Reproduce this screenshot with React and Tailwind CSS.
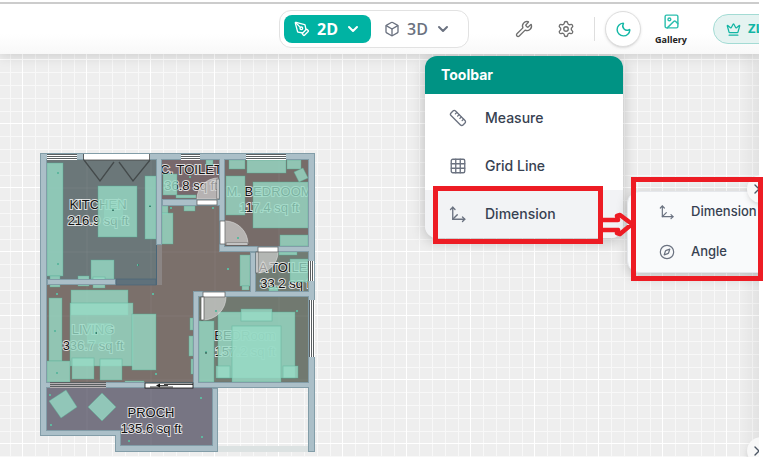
import {
  Box,
  ChevronDown,
  ChevronRight,
  Compass,
  Crown,
  Grid3x3,
  Image,
  Moon,
  Move3d,
  PenTool,
  Ruler,
  Settings,
  Wrench,
} from "lucide-react";

const WALL = "#abbfc8";
const WALL_EDGE = "#829da8";

const rooms = [
  { fill: "#6b7779", points: "46,159 157,159 157,280 46,280" },
  { fill: "#7b706b", points: "46,284 157,284 157,205 252,205 252,292 194,292 194,383 46,383" },
  { fill: "#78686c", points: "161,159 220,159 220,200 161,200" },
  { fill: "#776c69", points: "224,159 309,159 309,247 224,247" },
  { fill: "#717c74", points: "255,251 309,251 309,292 255,292" },
  { fill: "#717970", points: "198,296 309,296 309,383 198,383" },
  { fill: "#777583", points: "46,387 213,387 213,446 120,446 120,431 46,431" },
];

const labels = [
  { x: 98, y: 209, name: "KITCHEN", area: "216.9 sq ft" },
  { x: 191, y: 174, name: "C. TOILET", area: "36.8 sq ft" },
  { x: 269, y: 196, name: "M. BEDROOM", area: "117.4 sq ft" },
  { x: 287, y: 272, name: "A TOILET", area: "33.2 sq ft" },
  { x: 93, y: 334, name: "LIVING", area: "336.7 sq ft" },
  { x: 245, y: 340, name: "BEDRoom", area: "157.2 sq ft" },
  { x: 151, y: 417, name: "PROCH", area: "135.6 sq ft" },
];

// x, y, width, height
const furniture = [
  [47, 163, 16, 113],
  [98, 186, 39, 51],
  [145, 176, 11, 63],
  [91, 260, 23, 19],
  [50, 276, 10, 11],
  [78, 276, 11, 10],
  [93, 277, 12, 11],
  [163, 174, 14, 21],
  [176, 195, 20, 3],
  [206, 160, 7, 5],
  [162, 206, 6, 8],
  [162, 213, 11, 31],
  [184, 206, 11, 5],
  [229, 160, 16, 9],
  [247, 160, 39, 13],
  [287, 160, 14, 9],
  [226, 176, 19, 39],
  [253, 182, 55, 46],
  [280, 235, 28, 11],
  [279, 252, 18, 3],
  [290, 259, 18, 23],
  [240, 255, 10, 31],
  [242, 286, 7, 4],
  [269, 287, 9, 4],
  [71, 290, 57, 25],
  [70, 303, 63, 63],
  [132, 314, 24, 56],
  [49, 298, 13, 63],
  [47, 361, 23, 21],
  [72, 358, 22, 21],
  [100, 359, 22, 21],
  [125, 381, 19, 3],
  [190, 318, 3, 12],
  [189, 336, 4, 20],
  [191, 359, 2, 15],
  [199, 321, 15, 61],
  [218, 312, 77, 66],
  [241, 309, 31, 12],
  [232, 326, 49, 56],
  [216, 366, 14, 12],
  [283, 366, 15, 12],
];

const walls = [
  [40, 153, 275, 7],
  [40, 153, 7, 283],
  [156, 153, 6, 92],
  [219, 153, 6, 99],
  [162, 199, 63, 7],
  [219, 246, 96, 6],
  [250, 252, 6, 44],
  [193, 291, 122, 6],
  [193, 291, 6, 97],
  [40, 382, 275, 6],
  [47, 279, 69, 6],
  [308, 153, 7, 299],
  [40, 430, 81, 6],
  [115, 430, 6, 22],
  [115, 445, 103, 7],
  [212, 388, 6, 64],
];

// windows in the walls, vertical ones have their panes upright
const openings = [
  { x: 47, y: 154, w: 30, h: 6 },
  { x: 181, y: 154, w: 19, h: 6 },
  { x: 246, y: 154, w: 40, h: 6 },
  { x: 50, y: 382, w: 56, h: 6, fill: "#b5b0b2" },
  { x: 308, y: 261, w: 6, h: 20, vertical: true },
  { x: 309, y: 300, w: 6, h: 57, vertical: true },
];

const dots = [
  [58, 173], [58, 264], [138, 265], [113, 210], [150, 206], [171, 208], [213, 208], [190, 177],
  [228, 269], [57, 294], [153, 294], [156, 374], [216, 311], [297, 311], [57, 373], [50, 395],
  [51, 425], [129, 441], [201, 398], [202, 437], [238, 238], [55, 331], [96, 333], [206, 352],
];

function FloorPlan() {
  return (
    <svg
      className="absolute top-[98px] left-[39px]"
      width="277"
      height="302"
      viewBox="39 152 277 302"
      role="img"
      aria-label="Floor plan"
    >
      {rooms.map((room) => (
        <polygon key={room.points} points={room.points} fill={room.fill} />
      ))}
      <rect x="218" y="446" width="90" height="6" fill="#dce2e2" />
      <g stroke="#ffffff" strokeOpacity=".06">
        <path d="M87 160v276M151 160v286M215 160v220M279 160v220M47 188h262M47 252h262M47 316h262M47 380h262" />
      </g>
      <g
        fontFamily="'Liberation Sans', Arial, sans-serif"
        fontSize="13"
        textAnchor="middle"
        fill="#111"
        stroke="#fff"
        strokeOpacity=".75"
        strokeWidth="2"
        paintOrder="stroke"
      >
        {labels.map((l) => (
          <g key={l.name}>
            <text x={l.x} y={l.y}>{l.name}</text>
            <text x={l.x} y={l.y + 16}>{l.area}</text>
          </g>
        ))}
      </g>

      <g fill="#97dbc5" fillOpacity=".8" stroke="#58af98" strokeOpacity=".6" strokeWidth=".7">
        {furniture.map(([x, y, w, h]) => (
          <rect key={`${x}-${y}`} x={x} y={y} width={w} height={h} />
        ))}
        <path d="M294 172l9-4 5 10-9 4z" />
        <path d="M49 401l17-11 11 17-16 11z" />
        <path d="M102 393l14 14-14 14-14-14z" />
      </g>
      <g fill="#97dbc5" fillOpacity=".45">
        <rect x="104" y="200" width="19" height="20" />
        <rect x="87" y="323" width="24" height="21" />
      </g>

      {/* walls: edges first, so that the joints stay open */}
      <g stroke={WALL_EDGE} strokeWidth="1">
        {walls.map(([x, y, w, h]) => (
          <rect key={`e${x}-${y}-${w}`} x={x + 0.5} y={y + 0.5} width={w - 1} height={h - 1} />
        ))}
      </g>
      <g fill={WALL}>
        {walls.map(([x, y, w, h]) => (
          <rect key={`f${x}-${y}-${w}`} x={x + 1} y={y + 1} width={w - 2} height={h - 2} />
        ))}
      </g>
      <rect x="116" y="279" width="40" height="6" fill="#5f717b" stroke="#4a6678" strokeWidth=".7" />
      <path d="M156.500 245v40" stroke="#4a6678" />
      <rect x="157" y="245" width="5" height="40" fill="#8b8584" />

      {openings.map((o) => (
        <g key={`${o.x}-${o.y}`}>
          <rect x={o.x} y={o.y} width={o.w} height={o.h} fill={o.fill || "#fff"} />
          <path
            d={
              o.vertical
                ? `M${o.x + 0.5} ${o.y}v${o.h}M${o.x + 2.5} ${o.y}v${o.h}M${o.x + 4.5} ${o.y}v${o.h}`
                : `M${o.x} ${o.y + 0.5}h${o.w}M${o.x} ${o.y + 2.5}h${o.w}M${o.x} ${o.y + 4.5}h${o.w}`
            }
            stroke="#5a5f61"
          />
        </g>
      ))}

      {/* folding door of the kitchen */}
      <rect x="84" y="154" width="66" height="6" fill="#fff" />
      <path d="M83.500 154v6h66v-6" fill="none" stroke="#444" strokeWidth=".8" />
      <path d="M84 160l16 21 14-19M119 162l14 19 17-21" fill="none" stroke="#444a4b" strokeWidth="1.300" />

      {/* swing doors */}
      <g fill="#cfcfcd" fillOpacity=".72" stroke="#ddd" strokeWidth=".6">
        <path d="M218 199h-21a21 21 0 0 1 21-21z" />
        <path d="M225 244v-23a23 23 0 0 1 23 23z" />
        <path d="M257 252h21a21 21 0 0 1-21 21z" />
        <path d="M203 297h23a23 23 0 0 1-23 23z" />
      </g>
      <g fill="#fff" stroke="#555" strokeWidth=".7">
        <rect x="197" y="200" width="20" height="5" />
        <rect x="217" y="179" width="2" height="20" />
        <rect x="220" y="221" width="5" height="23" />
        <rect x="226" y="243" width="22" height="2" />
        <rect x="258" y="247" width="20" height="5" />
        <rect x="256" y="252" width="2" height="21" />
        <rect x="203" y="292" width="22" height="5" />
        <rect x="201" y="297" width="3" height="23" />
      </g>

      {/* sliding door between living room and porch */}
      <rect x="145" y="383" width="48" height="5" fill="#fff" stroke="#111" strokeWidth=".8" />
      <path d="M164 384.500h29M150 387h23M157 385.500h11" stroke="#111" strokeWidth=".8" />
      <path d="M156 385.500l4-2v4z" fill="#111" />

      {dots.map(([x, y]) => (
        <rect key={`${x}-${y}`} x={x - 1} y={y - 1} width="2" height="2" fill="#5fb79f" />
      ))}
      <path d="M96 333h1M206 352v2M150 206v1M113 210v1M138 265h1" stroke="#24463e" />
    </svg>
  );
}

function CanvasGrid() {
  return (
    <svg className="absolute inset-0 h-full w-full" aria-hidden="true">
      <defs>
        <pattern id="grid" x="22" y="5" width="64" height="64" patternUnits="userSpaceOnUse">
          <path
            d="M13.500 0v64M26.500 0v64M39.500 0v64M52.500 0v64M0 13.500h64M0 26.500h64M0 39.500h64M0 52.500h64"
            stroke="#f8f8f8"
          />
          <path d="M0 .5h64M.5 0v64" stroke="#fff" />
        </pattern>
      </defs>
      <rect width="100%" height="100%" fill="#eeeeee" />
      <rect width="100%" height="100%" fill="url(#grid)" />
    </svg>
  );
}

function Header() {
  return (
    <header className="relative flex h-[52px] shrink-0 items-center justify-end border-t-2 border-[#cccccc] bg-linear-to-b from-white from-60% to-[#f8f8f8] font-['Open_Sans',sans-serif] whitespace-nowrap shadow-[0_2px_12px_rgba(0,0,0,0.14)]">
      <div className="mr-[46px] flex h-[38px] w-[190px] items-center rounded-xl border border-[#e2e2e2] bg-white p-1">
        <button
          type="button"
          className="flex h-7 w-[88px] items-center justify-center gap-[7px] rounded-lg bg-[#00b3a3] text-base font-bold text-white"
        >
          <PenTool size={16} />
          2D
          <ChevronDown size={16} strokeWidth={3} />
        </button>
        <button
          type="button"
          className="flex h-7 w-[94px] items-center justify-center gap-[7px] text-base font-semibold text-[#6b7280]"
        >
          <Box size={16} />
          3D
          <ChevronDown size={16} strokeWidth={3} />
        </button>
      </div>
      <div className="flex items-center gap-6 text-[#6f6f6f]">
        <button type="button" aria-label="Tools">
          <Wrench size={18} strokeWidth={1.8} />
        </button>
        <button type="button" aria-label="Settings">
          <Settings size={18} strokeWidth={1.8} />
        </button>
      </div>
      <div className="mr-2.5 ml-[19px] h-6 w-px bg-[#dedede]" />
      <button
        type="button"
        aria-label="Dark mode"
        className="flex size-9 items-center justify-center rounded-full border border-[#dddddd] bg-white text-[#14b8a6] shadow-sm"
      >
        <Moon size={17} />
      </button>
      <button
        type="button"
        className="flex w-[60px] flex-col items-center gap-1 text-[9px] leading-3 font-bold text-[#222222]"
      >
        <Image size={17} className="text-[#2bbfae]" />
        Gallery
      </button>
      <div className="ml-3 w-[46px] overflow-hidden">
        <button
          type="button"
          className="flex h-[30px] w-[90px] items-center gap-[7px] rounded-full border border-[#a3dbd4] bg-[#e5f3f1] pl-3 text-[13px] font-bold text-[#12b5a4]"
        >
          <Crown size={15} />
          ZL
        </button>
      </div>
    </header>
  );
}

function ToolItem({ icon: Icon, label, active }) {
  return (
    <button
      type="button"
      className={`flex h-12 w-full items-center gap-[18px] pl-6 text-sm font-medium text-[#374151] ${
        active ? "bg-[#f2f3f5]" : "bg-white"
      }`}
    >
      <Icon size={18} strokeWidth={1.8} className="text-[#6b7280]" />
      {label}
      {active && <ChevronRight size={12} className="mr-4 ml-auto text-[#9ca3af]" />}
    </button>
  );
}

function Toolbar() {
  return (
    <div className="absolute top-0.5 right-[136px] w-[198px] overflow-hidden rounded-xl font-[Inter,sans-serif] shadow-[0_3px_14px_rgba(0,0,0,0.22)]">
      <h2 className="bg-[#009384] px-4 py-[9px] text-sm leading-5 font-bold text-white">Toolbar</h2>
      <ToolItem icon={Ruler} label="Measure" />
      <ToolItem icon={Grid3x3} label="Grid Line" />
      <ToolItem icon={Move3d} label="Dimension" active />
    </div>
  );
}

function Submenu() {
  const items = [
    { icon: Move3d, label: "Dimension" },
    { icon: Compass, label: "Angle" },
  ];
  return (
    <div className="absolute top-[137px] -right-5 w-[152px] rounded-xl border border-[#e5e7eb] bg-[#f9fafb] font-[Inter,sans-serif] shadow-[0_3px_12px_rgba(0,0,0,0.2)]">
      {items.map(({ icon: Icon, label }) => (
        <button
          key={label}
          type="button"
          className="flex h-10 w-full items-center gap-4 pl-[31px] text-[13px] font-medium text-[#374151]"
        >
          <Icon size={16} strokeWidth={1.8} className="text-[#6b7280]" />
          {label}
        </button>
      ))}
    </div>
  );
}

export default function App() {
  return (
    <div className="relative flex h-screen flex-col overflow-hidden bg-white pt-0.5 pr-[11px] pb-[9px]">
      <div className="flex min-h-0 flex-1 flex-col overflow-hidden">
        <div className="relative z-10">
          <Header />
        </div>
        <main className="relative min-h-0 flex-1">
          <div className="absolute inset-0 overflow-hidden">
            <CanvasGrid />
            <FloorPlan />
            <div className="absolute inset-y-0 right-0 w-5 bg-linear-to-r from-transparent to-black/5" />
          </div>
        </main>
      </div>

      {/* floating menus over the canvas */}
      <div className="absolute top-[54px] right-[11px] bottom-[9px] left-0 z-20 overflow-hidden">
        <Toolbar />
        <Submenu />
        <button
          type="button"
          aria-label="Expand panel"
          className="absolute top-[121px] -right-4 flex size-7 items-center rounded-full bg-[#f8f8f8] pl-0.5 text-[#4b5563] shadow-md"
        >
          <ChevronRight size={16} />
        </button>
        <button
          type="button"
          aria-label="Expand details"
          className="absolute -right-4 -bottom-2 flex size-7 items-center rounded-full bg-[#f8f8f8] pl-0.5 text-[#4b5563] shadow-md"
        >
          <ChevronRight size={16} />
        </button>
      </div>

      {/* callouts */}
      <div className="absolute top-[186px] right-[167px] z-30 h-[58px] w-[170px] border-5 border-[#ed1c24]" />
      <div className="absolute top-[177px] right-[7px] z-30 h-[104px] w-[132px] border-5 border-[#ed1c24]" />
      <svg
        className="absolute top-[210px] right-[136px] z-30"
        width="32"
        height="28"
        viewBox="0 0 32 28"
        aria-hidden="true"
      >
        <path
          d="M0 10h16l-1-4 3-1 12 9-12 10-3-1 1-3H0"
          fill="none"
          stroke="#ed1c24"
          strokeWidth="4.500"
          strokeLinejoin="round"
        />
      </svg>
    </div>
  );
}
